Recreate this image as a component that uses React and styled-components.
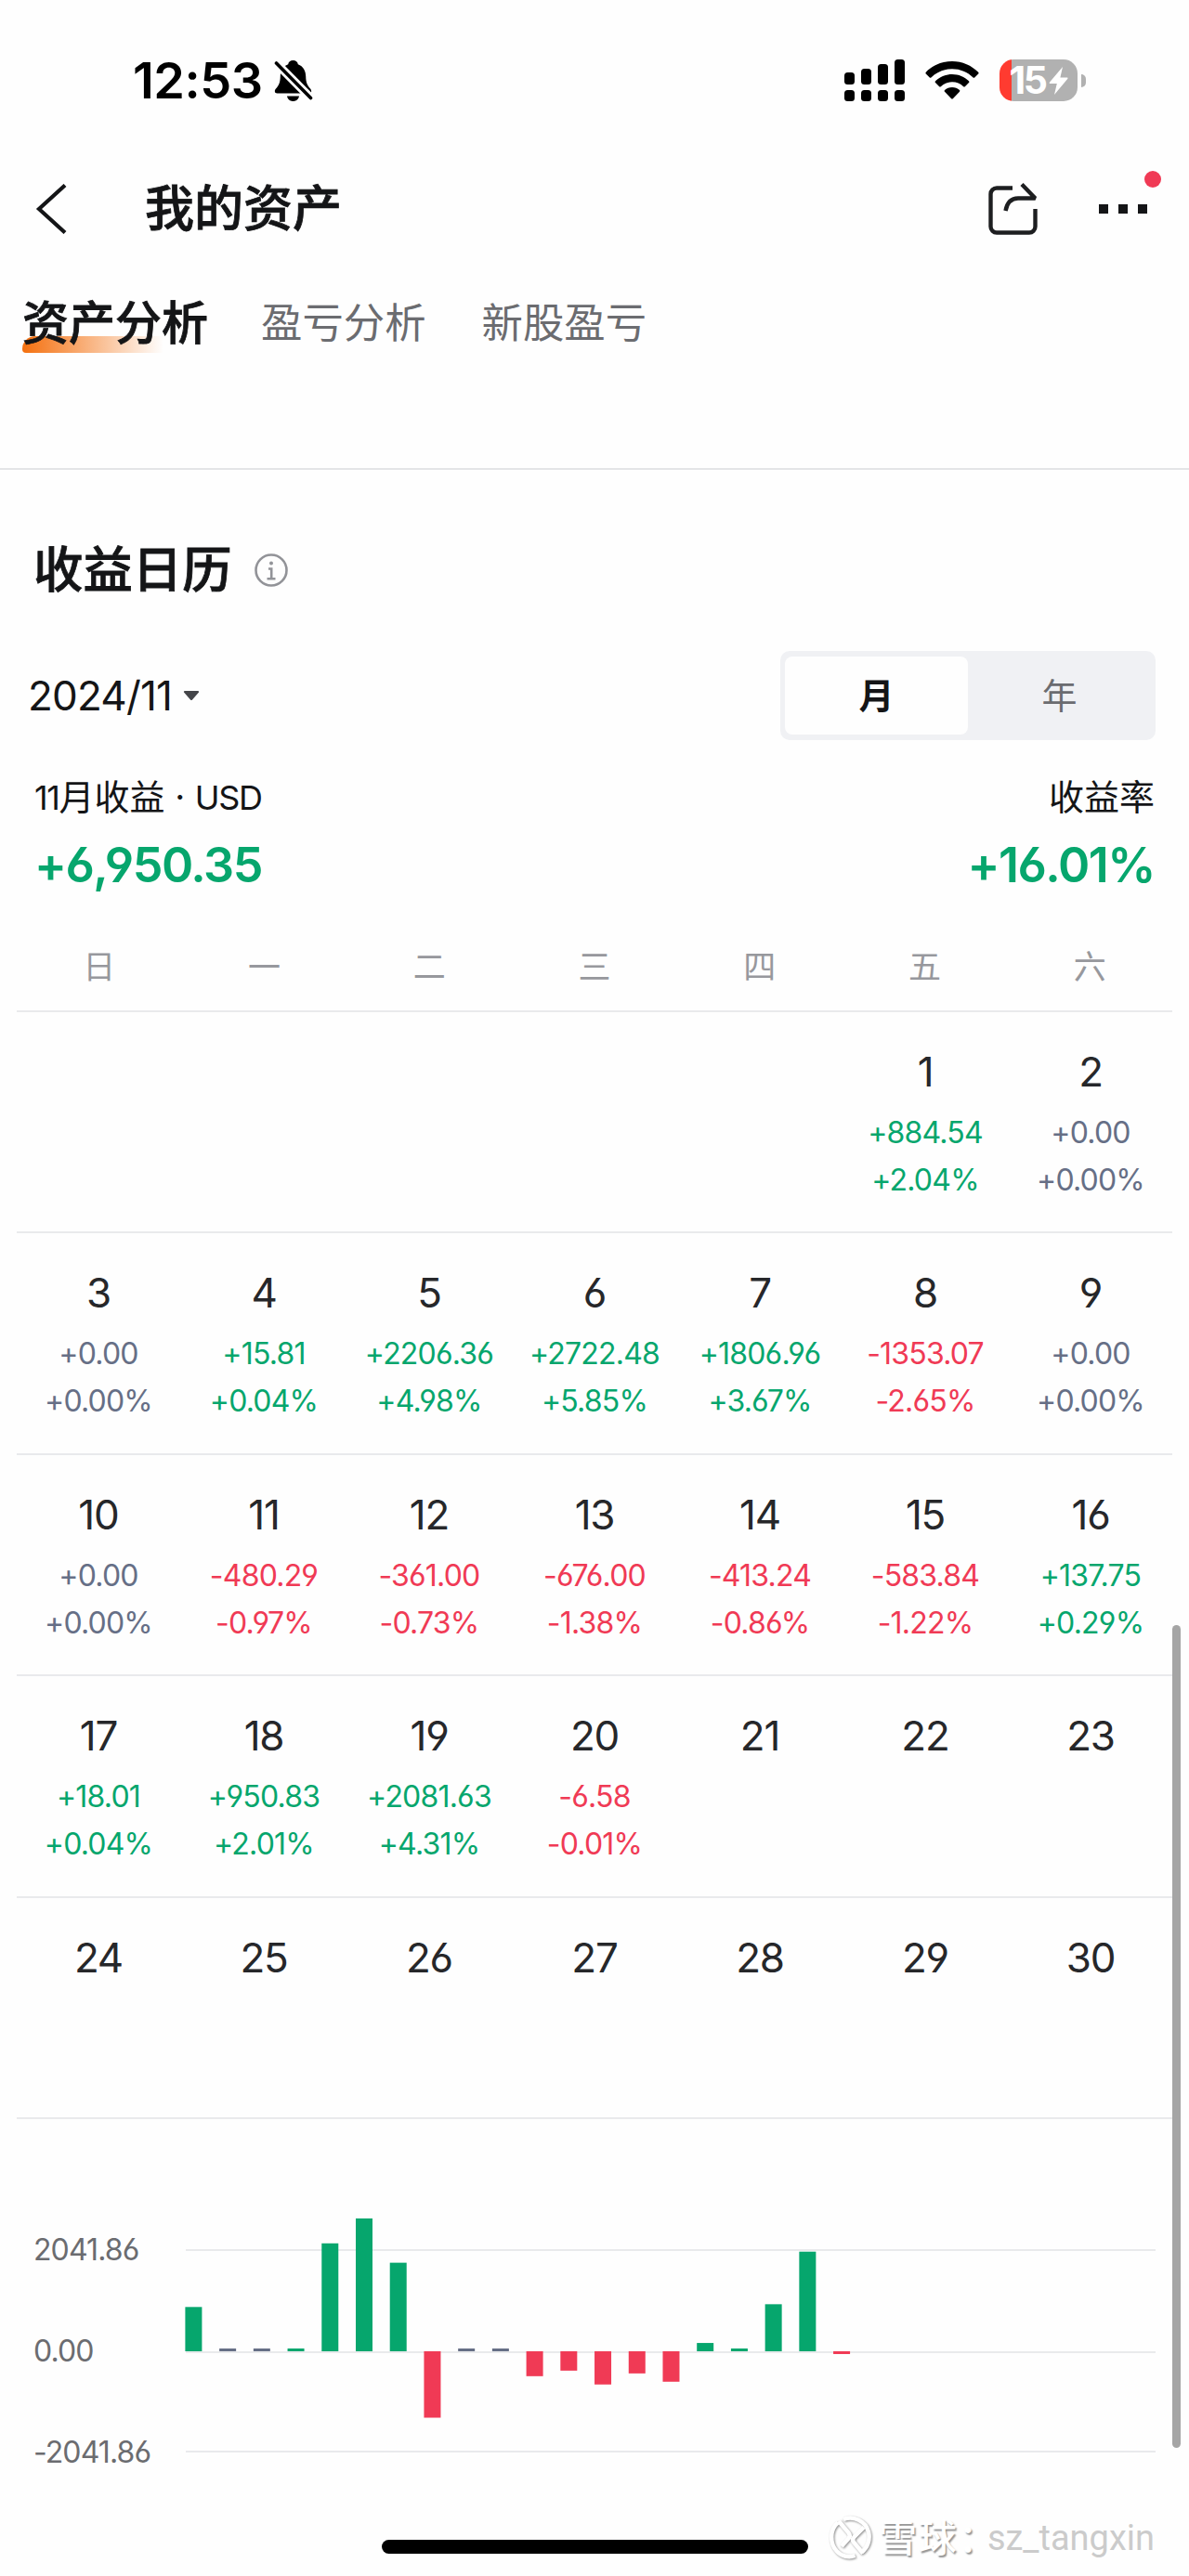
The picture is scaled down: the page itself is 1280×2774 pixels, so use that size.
import React, { useState } from 'react';
import styled, { createGlobalStyle } from 'styled-components';

const colors = {
  up: '#06a66d',
  down: '#f03a55',
  flat: '#666f86',
};

const GlobalStyle = createGlobalStyle`
  * {
    box-sizing: border-box;
  }

  body {
    margin: 0;
    background: #fefefe;
    font-family: 'Inter', 'Noto Sans CJK SC', sans-serif;
    font-feature-settings: 'cv03', 'cv04';
    color: #141517;
  }

  button {
    font: inherit;
    font-feature-settings: inherit;
    color: inherit;
    padding: 0;
    border: none;
    background: none;
    cursor: pointer;
  }
`;

const Screen = styled.div`
  position: relative;
  width: 1280px;
  height: 2774px;
  overflow: hidden;
  background: #fefefe;
`;

const StatusBar = styled.div`
  display: flex;
  align-items: center;
  height: 150px;
  padding: 23px 111px 0 143px;
`;

const Clock = styled.span`
  width: 152px;
  font-size: 54px;
  font-weight: 600;
  letter-spacing: -0.5px;
  line-height: 60px;
  color: #000;
  white-space: nowrap;
`;

const StatusIcons = styled.div`
  display: flex;
  align-items: center;
  margin-left: auto;
`;

const SignalIcon = styled.svg`
  margin-right: 22px;
`;

const WifiIcon = styled.svg`
  margin-right: 22px;
`;

const Battery = styled.div`
  display: flex;
  align-items: center;
  justify-content: center;
  gap: 3px;
  width: 84px;
  height: 45px;
  border-radius: 15px;
  background: linear-gradient(90deg, #ff3b30 13px, #b1b1b1 13px);
`;

const BatteryLevel = styled.span`
  font-size: 41px;
  font-weight: 700;
  line-height: 45px;
  letter-spacing: -2.4px;
  color: #fff;
`;

const BatteryCap = styled.div`
  width: 5px;
  height: 14px;
  margin-left: 4px;
  border-radius: 0 5px 5px 0;
  background: #b1b1b1;
`;

const Header = styled.header`
  display: flex;
  align-items: center;
  height: 150px;
  padding: 0 45px 0 38px;
`;

const BackButton = styled.button`
  display: flex;
  width: 118px;
`;

const Title = styled.h1`
  margin: 0;
  font-size: 53px;
  font-weight: 500;
  line-height: 80px;
  -webkit-text-stroke: 0.8px currentColor;
`;

const HeaderActions = styled.div`
  display: flex;
  align-items: center;
  gap: 65px;
  margin-left: auto;
`;

const IconButton = styled.button`
  position: relative;
  display: flex;
`;

const UnreadDot = styled.span`
  position: absolute;
  top: -36px;
  right: -15px;
  width: 18px;
  height: 18px;
  border-radius: 50%;
  background: #f03a55;
`;

const Tabs = styled.nav`
  display: flex;
  align-items: flex-start;
  height: 206px;
  padding: 17px 24px 0;
  border-bottom: 2px solid #e4e5e7;
`;

const Tab = styled.button`
  position: relative;
  isolation: isolate;
  margin-right: ${props => (props.$active ? '57px' : '60px')};
  font-size: ${props => (props.$active ? '50px' : '44.4px')};
  font-weight: ${props => (props.$active ? 500 : 400)};
  line-height: 62px;
  color: ${props => (props.$active ? '#141517' : '#6b6c70')};
  -webkit-text-stroke: ${props => (props.$active ? '0.8px' : '0')} currentColor;

  &::before {
    content: '';
    display: ${props => (props.$active ? 'block' : 'none')};
    position: absolute;
    z-index: -1;
    left: 0;
    top: 45px;
    width: 152px;
    height: 18px;
    border-radius: 14px 0 0 4px;
    background: linear-gradient(90deg, #f4700f, rgba(244, 112, 15, 0));
  }
`;

const SectionTitle = styled.h2`
  display: flex;
  align-items: center;
  gap: 24px;
  height: 60px;
  margin: 78px 36px 57px;
  font-size: 53.4px;
  font-weight: 500;
  line-height: 60px;
  -webkit-text-stroke: 0.8px currentColor;
`;

const Controls = styled.div`
  display: flex;
  align-items: center;
  justify-content: space-between;
  height: 96px;
  padding: 0 36px 0 30px;
`;

const MonthPicker = styled.button`
  display: flex;
  align-items: center;
  gap: 12px;
  font-size: 44px;
  letter-spacing: -0.8px;
  line-height: 60px;
`;

const Segment = styled.div`
  display: flex;
  width: 404px;
  height: 96px;
  padding: 6px 5px;
  border-radius: 10px;
  background: #f0f1f4;
`;

const SegmentButton = styled.button`
  flex: 1;
  border-radius: 8px;
  font-size: 38px;
  line-height: 84px;
  font-weight: ${props => (props.$active ? 700 : 400)};
  color: ${props => (props.$active ? '#141517' : '#6b6c70')};
  background: ${props => (props.$active ? '#fefefe' : 'transparent')};
`;

const Summary = styled.div`
  display: flex;
  justify-content: space-between;
  padding: 36px 37px 31px;
`;

const SummaryItem = styled.div`
  text-align: ${props => (props.$right ? 'right' : 'left')};
`;

const SummaryLabel = styled.div`
  height: 50px;
  font-size: 38px;
  line-height: 50px;
`;

const Currency = styled.span`
  font-size: 36px;
  line-height: 1;
  letter-spacing: -1.4px;
`;

const SummaryValue = styled.div`
  margin-top: 19px;
  font-size: 52px;
  font-weight: 600;
  line-height: 60px;
  letter-spacing: -1.5px;
  color: ${colors.up};
`;

const Calendar = styled.div`
  padding: 0 18px;
`;

const Week = styled.div`
  display: grid;
  grid-template-columns: repeat(7, ${props => (props.$head ? '1fr' : '178px')});
  height: ${props => (props.$head ? '97px' : '238.4px')};
  border-bottom: 2px solid #e9eaec;
  text-align: center;
`;

const Weekday = styled.span`
  font-size: 35px;
  line-height: 96px;
  color: #97989d;
`;

const Day = styled.div`
  padding: 38px 2px 0 0;
`;

const DayNumber = styled.div`
  margin-bottom: 14px;
  font-size: 44px;
  line-height: 52px;
  letter-spacing: -1.2px;
  color: #26272a;
`;

const DayValue = styled.div`
  font-size: 32px;
  line-height: 51px;
  letter-spacing: -0.8px;
  color: ${props => colors[props.$tone]};
`;

const Chart = styled.div`
  display: flex;
  height: 413px;
  padding: 0 36px;
`;

const ChartLabels = styled.div`
  display: flex;
  flex-direction: column;
  width: 163px;
  padding-top: 86px;
`;

const ChartLabel = styled.span`
  font-size: 32px;
  line-height: 109px;
  letter-spacing: -0.9px;
  color: #6b6c70;
`;

const HomeIndicator = styled.div`
  width: 459px;
  height: 15px;
  margin: 40px auto 0;
  border-radius: 8px;
  background: #000;
`;

const ScrollThumb = styled.div`
  position: absolute;
  top: 1750px;
  right: 9px;
  width: 9px;
  height: 886px;
  border-radius: 5px;
  background: #a5a5a5;
`;

const Watermark = styled.div`
  position: absolute;
  right: 37px;
  bottom: 14px;
  display: flex;
  align-items: center;
  height: 54px;
`;

const WatermarkLogo = styled.svg`
  filter: drop-shadow(1px 1.5px 1px rgba(0, 0, 0, 0.45));
`;

const WatermarkBrand = styled.span`
  width: 117px;
  margin-left: 6px;
  font-size: 41px;
  font-weight: 500;
  line-height: 52px;
  letter-spacing: 2px;
  color: #fff;
  text-shadow: 1.5px 1.5px 1.5px rgba(0, 0, 0, 0.42);
  white-space: nowrap;
`;

const WatermarkUser = styled.span`
  font-family: 'Roboto', sans-serif;
  font-size: 38px;
  line-height: 60px;
  color: #cbcbcb;
`;

const weekdays = ['日', '一', '二', '三', '四', '五', '六'];

const records = [
  ['+884.54', '+2.04%'],
  ['+0.00', '+0.00%'],
  ['+0.00', '+0.00%'],
  ['+15.81', '+0.04%'],
  ['+2206.36', '+4.98%'],
  ['+2722.48', '+5.85%'],
  ['+1806.96', '+3.67%'],
  ['-1353.07', '-2.65%'],
  ['+0.00', '+0.00%'],
  ['+0.00', '+0.00%'],
  ['-480.29', '-0.97%'],
  ['-361.00', '-0.73%'],
  ['-676.00', '-1.38%'],
  ['-413.24', '-0.86%'],
  ['-583.84', '-1.22%'],
  ['+137.75', '+0.29%'],
  ['+18.01', '+0.04%'],
  ['+950.83', '+2.01%'],
  ['+2081.63', '+4.31%'],
  ['-6.58', '-0.01%'],
];

const FIRST_DAY_OFFSET = 5;
const DAYS_IN_MONTH = 30;

const weeks = [0, 1, 2, 3, 4].map((week) =>
  weekdays.map((_, index) => week * 7 + index + 1 - FIRST_DAY_OFFSET)
);

const getTone = (amount) => {
  const value = parseFloat(amount);
  if (value === 0) return 'flat';
  return value > 0 ? 'up' : 'down';
};

// bars grow in whole steps, an empty day still gets one
const getBarHeight = (value) => Math.max(1, Math.ceil(Math.abs(value) * 0.01728)) * 2.98;

const ProfitChart = () => {
  const baseline = 250;

  return (
    <Chart>
      <ChartLabels>
        <ChartLabel>2041.86</ChartLabel>
        <ChartLabel>0.00</ChartLabel>
        <ChartLabel>-2041.86</ChartLabel>
      </ChartLabels>
      <svg width="1045" height="413" viewBox="0 0 1045 413">
        {[140, 250, 357].map((y) => (
          <rect key={y} x="1" y={y} width="1044" height="2" fill="#e9eaec" />
        ))}
        {records.map(([amount], index) => {
          const value = parseFloat(amount);
          const height = getBarHeight(value);
          return (
            <rect
              key={index}
              x={0.4 + index * 36.72}
              y={value < 0 ? baseline : baseline - height}
              width="18"
              height={height}
              fill={colors[getTone(amount)]}
            />
          );
        })}
      </svg>
    </Chart>
  );
};

const App = () => {
  const [activeTab, setActiveTab] = useState('资产分析');
  const [period, setPeriod] = useState('月');

  return (
    <Screen>
      <GlobalStyle />

      <StatusBar>
        <Clock>12:53</Clock>
        <svg width="42" height="46" viewBox="0 0 42 46">
          <path d="M20.500 1c-3 0-5 1.800-5.300 4.300C9.500 7.500 7 12 6.800 18c-.2 7-1.300 9.500-4.600 13.300C-.2 34 .8 36.500 3.500 36.500h34c2.700 0 3.700-2.500 1.400-5.200-3.300-3.800-4.500-6.300-4.700-13.300-.2-6-2.700-10.500-8.400-12.700C25.500 2.800 23.500 1 20.500 1z" />
          <path d="M14 39.500h13c-.6 3.300-3.200 5.500-6.500 5.500s-5.900-2.200-6.500-5.500z" />
          <path d="M2 3.500L40 42" stroke="#fefefe" strokeWidth="9" />
          <path d="M2.500 4L39.500 41.500" stroke="#000" strokeWidth="3.600" strokeLinecap="round" />
        </svg>
        <StatusIcons>
          <SignalIcon width="65" height="46" viewBox="0 0 65 46">
            {[14, 10, 5, 0].map((top, index) => (
              <g key={top}>
                <rect x={index * 18} y={top} width="11" height={27 - top} rx="3.500" />
                <rect x={index * 18} y="33" width="11" height="12" rx="3.500" />
              </g>
            ))}
          </SignalIcon>
          <WifiIcon width="58" height="42" viewBox="0 0 58 42">
            <path d="M29 0C18 0 8 4.500.8 11.800c-.5.500-.5 1.200 0 1.700l4 4c.4.400 1.100.400 1.600 0C12.200 11.700 20.200 8.300 29 8.300s16.800 3.400 22.600 9.200c.5.400 1.200.400 1.600 0l4-4c.5-.5.5-1.200 0-1.700C50 4.500 40 0 29 0z" />
            <path d="M29 14c-7 0-13.400 2.800-18 7.300-.5.500-.5 1.200 0 1.700l4.200 4.200c.4.400 1.100.400 1.600 0 3.200-3 7.500-4.900 12.200-4.900s9 1.900 12.200 4.900c.5.400 1.200.400 1.600 0L47 23c.5-.5.5-1.200 0-1.700-4.600-4.500-11-7.300-18-7.300z" />
            <path d="M29 28c-3.100 0-5.900 1.200-8 3.100-.5.500-.5 1.100 0 1.600l7.200 7.500c.5.500 1.100.5 1.600 0l7.200-7.500c.5-.5.5-1.100 0-1.600-2.100-1.900-4.900-3.100-8-3.100z" />
          </WifiIcon>
          <Battery>
            <BatteryLevel>15</BatteryLevel>
            <svg width="21" height="32" viewBox="0 0 21 32">
              <path d="M15 1L1 17.500c-.6.800-.3 1.500.6 1.500h7.200L6 31l14.200-17c.6-.8.300-1.500-.6-1.500h-7.200L15 1z" fill="#fff" />
            </svg>
          </Battery>
          <BatteryCap />
        </StatusIcons>
      </StatusBar>

      <Header>
        <BackButton aria-label="返回">
          <svg width="34" height="54" viewBox="0 0 34 54" fill="none">
            <path d="M32 1.500L4 27l28 25.500" stroke="#141517" strokeWidth="4.200" />
          </svg>
        </BackButton>
        <Title>我的资产</Title>
        <HeaderActions>
          <IconButton aria-label="分享">
            <svg width="54" height="58" viewBox="0 0 54 58" fill="none" stroke="#1d1e20" strokeWidth="4.400">
              <path d="M26 6.500H9A6.500 6.500 0 0 0 2.500 13v35A6.500 6.500 0 0 0 9 54.500h35A6.500 6.500 0 0 0 50.500 48V29" />
              <path d="M36 2.500L50.500 17.500H32C24 17.500 20 23 18.500 31" strokeLinejoin="bevel" />
            </svg>
          </IconButton>
          <IconButton aria-label="更多">
            <svg width="52" height="10" viewBox="0 0 52 10" fill="#141517">
              <rect width="10" height="10" />
              <rect x="21" width="10" height="10" />
              <rect x="42" width="10" height="10" />
            </svg>
            <UnreadDot />
          </IconButton>
        </HeaderActions>
      </Header>

      <Tabs>
        {['资产分析', '盈亏分析', '新股盈亏'].map((tab) => (
          <Tab key={tab} $active={activeTab === tab} onClick={() => setActiveTab(tab)}>
            {tab}
          </Tab>
        ))}
      </Tabs>

      <SectionTitle>
        收益日历
        <svg width="36" height="36" viewBox="0 0 36 36" fill="none" stroke="#929398" strokeWidth="2.600">
          <circle cx="18" cy="18" r="16.500" />
          <path d="M15 16.500h3.200V27M13.500 27.200h9" />
          <circle cx="18" cy="10.500" r="2" fill="#929398" stroke="none" />
        </svg>
      </SectionTitle>

      <Controls>
        <MonthPicker>
          2024/11
          <svg width="18" height="12" viewBox="0 0 18 12">
            <path d="M2 1h14c1 0 1.500 1 .8 1.800L10 10.500c-.6.700-1.400.7-2 0L1.200 2.800C.5 2 1 1 2 1z" fill="#444549" />
          </svg>
        </MonthPicker>
        <Segment>
          {['月', '年'].map((item) => (
            <SegmentButton key={item} $active={period === item} onClick={() => setPeriod(item)}>
              {item}
            </SegmentButton>
          ))}
        </Segment>
      </Controls>

      <Summary>
        <SummaryItem>
          <SummaryLabel>
            <Currency>11</Currency>月收益 · <Currency>USD</Currency>
          </SummaryLabel>
          <SummaryValue>+6,950.35</SummaryValue>
        </SummaryItem>
        <SummaryItem $right>
          <SummaryLabel>收益率</SummaryLabel>
          <SummaryValue>+16.01%</SummaryValue>
        </SummaryItem>
      </Summary>

      <Calendar>
        <Week $head>
          {weekdays.map((name) => (
            <Weekday key={name}>{name}</Weekday>
          ))}
        </Week>
        {weeks.map((week, index) => (
          <Week key={index}>
            {week.map((day) => {
              if (day < 1 || day > DAYS_IN_MONTH) return <Day key={day} />;
              const record = records[day - 1];
              return (
                <Day key={day}>
                  <DayNumber>{day}</DayNumber>
                  {record && (
                    <>
                      <DayValue $tone={getTone(record[0])}>{record[0]}</DayValue>
                      <DayValue $tone={getTone(record[0])}>{record[1]}</DayValue>
                    </>
                  )}
                </Day>
              );
            })}
          </Week>
        ))}
      </Calendar>

      <ProfitChart />
      <HomeIndicator />
      <ScrollThumb />

      <Watermark>
        <WatermarkLogo width="48" height="50" viewBox="0 0 48 50" fill="none" stroke="#fff" strokeWidth="4.500">
          <path d="M10 8.500C1 16 1 31 9 39.500c5 5.500 13 7 19.500 4.500" />
          <path d="M16 5c11-4.500 24 2 27 13.500 2 8.500-1 17-7.500 22" />
          <path d="M11 7l10.500 12.500c1.800 2.200 1.800 4 0 6L14 34" />
          <path d="M38 13.500L27.500 24c-2 2-2 3.800-.2 6L37 41.500" />
        </WatermarkLogo>
        <WatermarkBrand>雪球：</WatermarkBrand>
        <WatermarkUser>sz_tangxin</WatermarkUser>
      </Watermark>
    </Screen>
  );
};

export default App;
